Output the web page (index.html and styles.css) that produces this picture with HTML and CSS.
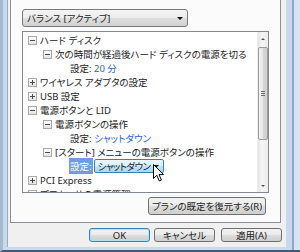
FILE: index.html
```html
<!DOCTYPE html>
<html lang="ja">
<head>
    <meta charset="UTF-8">
    <title>電源オプション</title>
    <link rel="stylesheet" href="styles.css">
</head>
<body>
    <div class="window">
        <div class="face">
            <div class="page">
                <div class="plan-select">
                    <span>バランス [アクティブ]</span>
                    <i class="caret"></i>
                </div>

                <div class="tree">
                    <ul class="rows">
                        <li class="row l0"><span class="exp minus"></span><span>ハード ディスク</span></li>
                        <li class="row l1"><span class="exp minus"></span><span>次の時間が経過後ハード ディスクの電源を切る</span></li>
                        <li class="row l2"><span class="leaf"></span><span>設定: <span class="val">20 分</span></span></li>
                        <li class="row l0"><span class="exp plus"></span><span>ワイヤレス アダプタの設定</span></li>
                        <li class="row l0"><span class="exp plus"></span><span>USB 設定</span></li>
                        <li class="row l0"><span class="exp minus"></span><span>電源ボタンと LID</span></li>
                        <li class="row l1"><span class="exp minus"></span><span>電源ボタンの操作</span></li>
                        <li class="row l2"><span class="leaf"></span><span>設定: <span class="val">シャットダウン</span></span></li>
                        <li class="row l1"><span class="exp minus"></span><span>[スタート] メニューの電源ボタンの操作</span></li>
                        <li class="row l2 selected">
                            <span class="leaf"></span><span class="label">設定:</span>
                            <span class="combo"><span>シャットダウン</span><i class="caret"></i></span>
                        </li>
                        <li class="row l0"><span class="exp plus"></span><span>PCI Express</span></li>
                        <li class="row l0"><span class="exp plus"></span><span>プロセッサの電源管理</span></li>
                    </ul>
                    <div class="scrollbar">
                        <div class="sb-btn"><i class="arrow up"></i></div>
                        <div class="thumb"><i class="grip"></i></div>
                        <div class="sb-btn bottom"><i class="arrow down"></i></div>
                    </div>
                </div>

                <div class="page-foot">
                    <button class="btn restore">プランの既定を復元する(R)</button>
                </div>
            </div>

            <div class="actions">
                <button class="btn default ok">OK</button>
                <button class="btn cancel">キャンセル</button>
                <button class="btn apply">適用(A)</button>
            </div>
        </div>
    </div>

    <!-- mouse pointer over the combo -->
    <svg class="cursor" width="12" height="19" viewBox="0 0 12 19">
        <path d="M0.5 0.5 L0.5 14.5 L3.8 11.3 L6.3 17 L8.4 16 L6 10.6 L10.5 10.6 Z" fill="#fff" stroke="#000" stroke-width="1"/>
    </svg>
</body>
</html>
```

FILE: styles.css
```css
* {
    margin: 0;
    padding: 0;
    box-sizing: border-box;
}

body {
    width: 300px;
    height: 252px;
    overflow: hidden;
    font-family: "Noto Sans", "Noto Sans CJK JP", sans-serif;
    font-size: 9.5px;
    font-feature-settings: "palt";
    color: #222;
    position: relative;
}

/* window frame */
.window {
    width: 300px;
    height: 252px;
    display: flex;
    background: linear-gradient(to right, transparent 0 289px, #8fa8c7 289px 291px, #d6e4f4 291px);
    background-color: #c6d9ef;
    border-left: 3px solid #a6b8ce;
    border-bottom: 2px solid #44597a;
    padding: 0 14px 3px 4px;
}

.face {
    flex: 1;
    display: flex;
    flex-direction: column;
    background: #f0f0f0;
    border-left: 1px solid #98acc5;
}

/* tab page */
.page {
    margin-left: 2px;
    width: 271px;
    height: 223px;
    display: flex;
    flex-direction: column;
    background: #fbfbfb;
    border: 1px solid #8c8f96;
    border-top: none;
}

.plan-select {
    margin: 9px 0 0 11px;
    width: 166px;
    height: 18px;
    display: flex;
    align-items: center;
    justify-content: space-between;
    padding: 0 4px 0 4px;
    border: 1px solid #7a7a7a;
    border-radius: 3px;
    background: linear-gradient(#f4f4f4 0%, #ececec 50%, #dedede 50%, #d2d2d2 100%);
}

.caret {
    flex: none;
    width: 0;
    height: 0;
    border-left: 3px solid transparent;
    border-right: 3px solid transparent;
    border-top: 3px solid #111;
}

/* tree view */
.tree {
    margin: 4px 0 0 11px;
    width: 247px;
    height: 162px;
    display: flex;
    background: #fff;
    border: 1px solid #848891;
}

.rows {
    flex: 1;
    list-style: none;
    padding-top: 1px;
    overflow: hidden;
}

.row {
    height: 14px;
    display: flex;
    align-items: center;
    white-space: nowrap;
}

.l0 { padding-left: 5px; }
.l1 { padding-left: 20px; }
.l2 { padding-left: 35px; }

.exp,
.leaf {
    flex: none;
    width: 9px;
    height: 9px;
    margin-right: 3px;
    position: relative;
}

.exp {
    border: 1px solid #a9a9a9;
    background: linear-gradient(#ffffff, #e4e4e4);
}

.exp::before {
    content: "";
    position: absolute;
    left: 1px;
    top: 3px;
    width: 5px;
    height: 1px;
    background: #4a4a4a;
}

.exp.plus::after {
    content: "";
    position: absolute;
    left: 3px;
    top: 1px;
    width: 1px;
    height: 5px;
    background: #4a4a4a;
}

.val {
    color: #2f61cf;
}

.selected .label {
    padding: 1px 1px;
    margin-left: -1px;
    background: #6f9de3;
    color: #fff;
}

.combo {
    margin-left: 1px;
    width: 70px;
    height: 14px;
    display: flex;
    align-items: center;
    justify-content: space-between;
    padding: 0 4px 0 3px;
    letter-spacing: -0.6px;
    border: 1px solid #3c7fb1;
    border-radius: 2px;
    background: linear-gradient(#eaf6fd 0%, #d9f0fc 50%, #bee6fd 50%, #a7d9f5 100%);
}

/* scrollbar */
.scrollbar {
    width: 11px;
    display: flex;
    flex-direction: column;
    background: linear-gradient(to right, #e4e4e4, #f6f6f6 40%, #ececec);
    border-left: 1px solid #ededed;
}

.sb-btn {
    height: 13px;
    display: flex;
    align-items: center;
    justify-content: center;
}

.sb-btn.bottom {
    margin-top: auto;
}

.arrow {
    width: 0;
    height: 0;
    border-left: 2px solid transparent;
    border-right: 2px solid transparent;
}

.arrow.up { border-bottom: 2px solid #555; }
.arrow.down { border-top: 2px solid #555; }

.thumb {
    margin-top: 2px;
    height: 93px;
    display: flex;
    align-items: center;
    justify-content: center;
    border: 1px solid #9b9b9b;
    border-radius: 2px;
    background: linear-gradient(to right, #f3f3f3, #e6e6e6 50%, #d6d6d6 50%, #cfcfcf);
}

.grip {
    width: 4px;
    height: 5px;
    background: repeating-linear-gradient(#6d6d6d 0 1px, transparent 1px 2px);
}

/* buttons */
.page-foot {
    display: flex;
    justify-content: flex-end;
    padding: 4px 14px 0 0;
}

.btn {
    font: inherit;
    font-feature-settings: "palt";
    color: #222;
    display: flex;
    align-items: center;
    justify-content: center;
    border: 1px solid #707070;
    border-radius: 3px;
    background: linear-gradient(#f2f2f2 0%, #ebebeb 50%, #dddddd 50%, #cfcfcf 100%);
}

.restore {
    width: 118px;
    height: 18px;
}

.actions {
    display: flex;
    justify-content: flex-end;
    gap: 4px;
    padding: 5px 4px 0 0;
}

.actions .btn {
    width: 61px;
    height: 14px;
}

.actions .apply {
    margin-left: 2px;
}

.btn.default {
    border-color: #3c7fb1;
    box-shadow: inset 0 0 0 1px #aee1fb;
}

.cursor {
    position: absolute;
    left: 153px;
    top: 164px;
}
```
